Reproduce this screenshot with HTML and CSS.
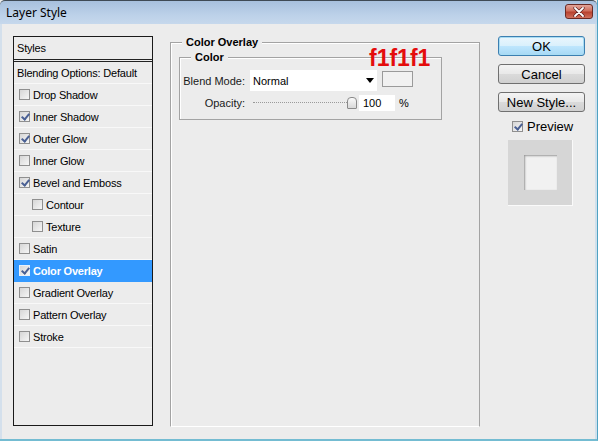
FILE: index.html
```html
<!DOCTYPE html>
<html lang="en">
<head>
    <meta charset="UTF-8">
    <title>Layer Style</title>
    <link rel="stylesheet" href="styles.css">
</head>
<body>
    <div class="window">
        <div class="titlebar">
            <span class="title">Layer Style</span>
            <div class="close-btn">
                <svg width="12" height="10" viewBox="0 0 12 10">
                    <path d="M2 1 L10 9 M10 1 L2 9" stroke="#5a2020" stroke-width="3.2" stroke-linecap="round"/>
                    <path d="M2 1 L10 9 M10 1 L2 9" stroke="#fff" stroke-width="1.8" stroke-linecap="round"/>
                </svg>
            </div>
        </div>

        <div class="client">
            <!-- left side list of effects -->
            <div class="styles-list">
                <div class="list-head">Styles</div>
                <div class="list-item blend">Blending Options: Default</div>
                <div class="list-item"><span class="check"></span>Drop Shadow</div>
                <div class="list-item"><span class="check on"></span>Inner Shadow</div>
                <div class="list-item"><span class="check on"></span>Outer Glow</div>
                <div class="list-item"><span class="check"></span>Inner Glow</div>
                <div class="list-item"><span class="check on"></span>Bevel and Emboss</div>
                <div class="list-item sub"><span class="check"></span>Contour</div>
                <div class="list-item sub"><span class="check"></span>Texture</div>
                <div class="list-item"><span class="check"></span>Satin</div>
                <div class="list-item active"><span class="check on"></span>Color Overlay</div>
                <div class="list-item"><span class="check"></span>Gradient Overlay</div>
                <div class="list-item"><span class="check"></span>Pattern Overlay</div>
                <div class="list-item"><span class="check"></span>Stroke</div>
            </div>

            <div class="panel">
                <fieldset class="group outer">
                    <legend>Color Overlay</legend>
                    <fieldset class="group inner">
                        <legend>Color</legend>
                        <div class="row">
                            <label class="field-label">Blend Mode:</label>
                            <div class="select">
                                <span>Normal</span>
                                <svg width="8" height="5" viewBox="0 0 8 5"><path d="M0 0 H8 L4 5 Z" fill="#000"/></svg>
                            </div>
                            <div class="swatch"></div>
                        </div>
                        <div class="row">
                            <label class="field-label">Opacity:</label>
                            <div class="slider">
                                <div class="track"></div>
                                <div class="thumb"></div>
                            </div>
                            <div class="num-input">100</div>
                            <span class="unit">%</span>
                        </div>
                    </fieldset>
                </fieldset>
                <div class="hex-note">f1f1f1</div>
            </div>

            <div class="actions">
                <div class="btn default">OK</div>
                <div class="btn">Cancel</div>
                <div class="btn">New Style...</div>
                <div class="preview-toggle"><span class="check on"></span>Preview</div>
                <div class="preview-box">
                    <div class="preview-swatch"></div>
                </div>
            </div>
        </div>
    </div>
</body>
</html>
```

FILE: styles.css
```css
* {
    margin: 0;
    padding: 0;
    box-sizing: border-box;
}
body {
    background: #ececec;
    font-family: "Liberation Sans", Arial, sans-serif;
    font-size: 11px;
    color: #000;
}
.window {
    width: 598px;
    height: 441px;
    display: flex;
    flex-direction: column;
    background: #ececec;
    border-right: 1px solid #4fa2c2;
    border-bottom: 2px solid #74bcd2;
}

/* Title bar */
.titlebar {
    height: 24px;
    display: flex;
    align-items: center;
    justify-content: space-between;
    padding: 0 4px 0 6px;
    border-top: 1px solid #3f4a55;
    border-radius: 5px 5px 0 0;
    background: linear-gradient(#a7c0dd, #bcd1e9 60%, #c6d8ec);
}
.title {
    font-family: "Noto Sans", "Open Sans", sans-serif;
    font-size: 12px;
    color: #000;
}
.close-btn {
    width: 28px;
    height: 15px;
    margin-top: -2px;
    display: flex;
    align-items: center;
    justify-content: center;
    border: 1px solid #6a2a24;
    border-radius: 3px;
    background: linear-gradient(#e2a59a, #cf6e5c 45%, #b8422f 55%, #d0705d);
}

.client {
    flex: 1;
    display: flex;
    align-items: flex-start;
    padding: 12px 0 0 11px;
    border-left: 2px solid #d4e0ec;
    border-right: 2px solid #cfe0ec;
}

/* Styles list */
.styles-list {
    width: 140px;
    height: 390px;
    border: 1px solid #1a1a1a;
    background: #ececec;
    letter-spacing: -0.2px;
}
.list-head {
    height: 25px;
    padding: 0 3px;
    line-height: 22px;
    border-bottom: 3px double #222;
}
.list-item {
    height: 22px;
    display: flex;
    align-items: center;
    padding-left: 5px;
    border-bottom: 1px solid #f8f8f8;
}
.list-item.blend {
    padding-left: 3px;
}
.list-item.sub {
    padding-left: 18px;
}
.list-item.active {
    background: #3399ff;
    color: #fff;
    font-weight: bold;
    border-bottom-color: #3399ff;
}

/* Checkbox */
.check {
    width: 11px;
    height: 11px;
    margin-right: 3px;
    flex-shrink: 0;
    border: 1px solid #8f8f8f;
    background: linear-gradient(135deg, #d6d6d6, #f6f6f6);
    position: relative;
}
.check.on::after {
    content: "";
    position: absolute;
    left: 3px;
    top: 0;
    width: 3px;
    height: 6px;
    border: solid #4a6094;
    border-width: 0 2px 2px 0;
    transform: rotate(40deg);
}
.list-item.active .check {
    border-color: #e8f0fa;
}

/* Centre panel */
.panel {
    position: relative;
    margin-left: 17px;
    width: 310px;
}
.group {
    border: 1px solid #a3a3a3;
    box-shadow: inset 1px 1px 0 #fff;
}
.group legend {
    margin-left: 11px;
    padding: 0 4px;
    line-height: 13px;
    font-weight: bold;
    background: #ececec;
}
.outer {
    height: 391px;
    border-bottom-color: #fff;
    padding: 2px 0 0 8px;
}
.outer > legend {
    margin-left: 3px;
}
.inner {
    width: 263px;
    padding: 6px 0 6px 0;
}
.row {
    display: flex;
    align-items: center;
    height: 21px;
}
.row + .row {
    margin-top: 1px;
}
.field-label {
    width: 65px;
    text-align: right;
    margin-right: 5px;
    color: #1a1a1a;
}
.select {
    width: 127px;
    height: 21px;
    background: #fff;
    display: flex;
    align-items: center;
    justify-content: space-between;
    padding: 0 3px 0 3px;
    font-size: 11px;
}
.swatch {
    width: 31px;
    height: 16px;
    margin-left: 5px;
    margin-top: -3px;
    background: #f1f1f1;
    border: 1px solid #9a9a9a;
}
.slider {
    position: relative;
    width: 104px;
    height: 14px;
    margin-left: 3px;
}
.track {
    position: absolute;
    left: 0;
    right: 6px;
    top: 6px;
    height: 1px;
    border-top: 1px dotted #9a9a9a;
}
.thumb {
    position: absolute;
    right: 0;
    top: 1px;
    width: 10px;
    height: 12px;
    border: 1px solid #8a8a8a;
    border-radius: 4px 4px 1px 1px;
    background: linear-gradient(#fafafa, #d8d8d8);
}
.num-input {
    width: 36px;
    height: 16px;
    margin-left: 2px;
    background: #fff;
    padding: 2px 0 0 4px;
    font-size: 11px;
}
.unit {
    margin-left: 4px;
}
.hex-note {
    position: absolute;
    left: 199px;
    top: 11px;
    font-size: 23px;
    line-height: 22px;
    font-weight: bold;
    color: #e40c0c;
}

/* Right column of buttons */
.actions {
    margin-left: 18px;
    width: 87px;
    display: flex;
    flex-direction: column;
}
.btn {
    height: 20px;
    margin-top: 8px;
    display: flex;
    align-items: center;
    justify-content: center;
    font-size: 13px;
    border: 1px solid #707070;
    border-radius: 3px;
    background: linear-gradient(#f4f4f4, #e8e8e8 50%, #dadada 52%, #d0d0d0);
}
.btn.default {
    margin-top: 0;
    border-color: #3c7fb1;
    box-shadow: inset 0 0 0 1px #a8dcf3;
    background: linear-gradient(#eaf6fd, #d9f0fc 50%, #bee6fd 52%, #a7d9f5);
}
.preview-toggle {
    display: flex;
    align-items: center;
    margin: 7px 0 0 14px;
    font-size: 13px;
}
.preview-toggle .check {
    margin-right: 4px;
}
.preview-box {
    width: 65px;
    height: 66px;
    margin: 6px 0 0 10px;
    background: #d6d6d6;
    border-right: 1px solid #fafafa;
    border-bottom: 1px solid #fafafa;
    display: flex;
    align-items: center;
    justify-content: center;
}
.preview-swatch {
    width: 33px;
    height: 35px;
    background: #f1f1f1;
    box-shadow: inset 1px 1px 2px #9a9a9a;
}
```
